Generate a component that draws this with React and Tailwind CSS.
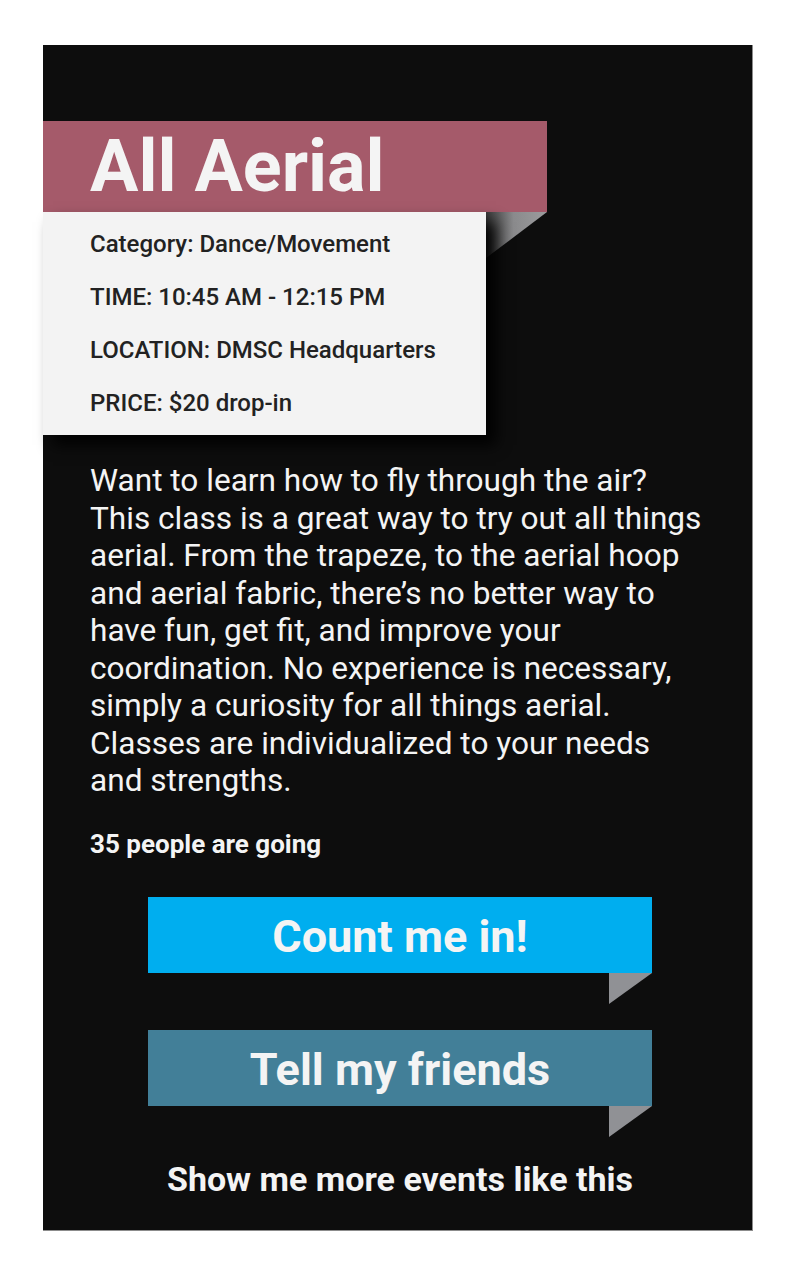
import React from 'react';

const details = [
    'Category: Dance/Movement',
    'TIME: 10:45 AM - 12:15 PM',
    'LOCATION: DMSC Headquarters',
    'PRICE: $20 drop-in',
];

const description = [
    'Want to learn how to fly through the air?',
    'This class is a great way to try out all things',
    'aerial. From the trapeze, to the aerial hoop',
    'and aerial fabric, there\u2019s no better way to',
    'have fun, get fit, and improve your',
    'coordination. No experience is necessary,',
    'simply a curiosity for all things aerial.',
    'Classes are individualized to your needs',
    'and strengths.',
];

// Ribbon button with the little folded corner under its right end
const RibbonButton = ({ label, color, className = '' }) => (
    <div className={`ml-[105px] w-[504px] ${className}`}>
        <button className={`block w-full h-[76px] overflow-hidden ${color} text-[#f4f4f4] text-[45px] font-bold leading-[80px] text-center`}>
            {label}
        </button>
        <div className="flex justify-end">
            <svg width="43" height="31" viewBox="0 0 43 31" className="block">
                <polygon points="0,0 43,0 0,31" fill="#909195" />
            </svg>
        </div>
    </div>
);

const App = () => {
    return (
        <div className="w-[800px] h-[1280px] bg-white pt-[45px] pl-[43px] font-['Roboto',sans-serif]">
            <div className="w-[710px] h-[1186px] bg-[#0d0d0d] border border-l-0 border-t-0 border-[#8c8c8c] pt-[76px]">
                {/* Title band */}
                <div className="w-[504px] h-[91px] bg-[#a55a6a] pl-[47px]">
                    <h1 className="text-[72px] leading-[91px] font-bold text-[#f4f4f4]">All Aerial</h1>
                </div>

                {/* Details card + folded corner */}
                <div className="flex items-start">
                    <div className="relative w-[443px] h-[223px] bg-[#f3f3f3] pl-[47px] pt-[6px] shadow-[10px_10px_14px_rgba(0,0,0,0.95)]">
                        {details.map((d) => (
                            <p key={d} className="text-[24px] leading-[53px] font-medium text-[#222]">{d}</p>
                        ))}
                    </div>
                    <svg width="61" height="46" viewBox="0 0 61 46" className="block">
                        <defs>
                            <linearGradient id="fold" x1="0" y1="0" x2="1" y2="0">
                                <stop offset="0" stopColor="#3a3a3a" />
                                <stop offset="0.45" stopColor="#8a8a8c" />
                                <stop offset="1" stopColor="#9c9c9e" />
                            </linearGradient>
                        </defs>
                        <polygon points="0,0 61,0 0,46" fill="url(#fold)" />
                    </svg>
                </div>

                {/* Description */}
                <p className="mt-[27px] pl-[47px] text-[31.6px] leading-[37.5px] text-[#f4f4f4] whitespace-nowrap">
                    {description.map((line, i) => (
                        <React.Fragment key={i}>
                            {line}
                            {i < description.length - 1 && <br />}
                        </React.Fragment>
                    ))}
                </p>

                <p className="mt-[30px] pl-[47px] text-[26px] leading-[28px] font-bold text-[#f4f4f4]">35 people are going</p>

                <RibbonButton label="Count me in!" color="bg-[#00aeef]" className="mt-[39px]" />
                <RibbonButton label="Tell my friends" color="bg-[#427f98]" className="mt-[26px]" />

                <p className="mt-[24px] text-center pl-[5px] text-[34px] leading-[36px] font-bold text-[#f4f4f4]">
                    Show me more events like this
                </p>
            </div>
        </div>
    );
};

export default App;
